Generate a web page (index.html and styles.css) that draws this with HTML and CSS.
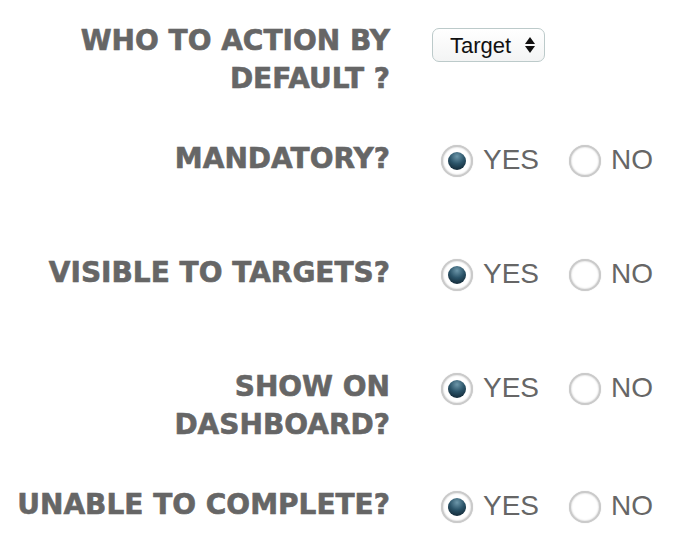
FILE: index.html
```html
<!DOCTYPE html>
<html lang="en">
<head>
    <meta charset="UTF-8">
    <title>Task settings</title>
    <link rel="stylesheet" href="styles.css">
</head>
<body>
    <form class="settings-form">
        <div class="setting-row">
            <label class="setting-label" for="actionBy">WHO TO ACTION BY<br>DEFAULT ?</label>
            <div class="setting-control">
                <div class="select-wrap">
                    <select id="actionBy">
                        <option>Target</option>
                        <option>Owner</option>
                    </select>
                    <svg class="select-arrows" width="10" height="17" viewBox="0 0 10 17">
                        <path d="M5 0 L10 7 L0 7 Z" fill="#111"/>
                        <path d="M0 9 L10 9 L5 16 Z" fill="#111"/>
                    </svg>
                </div>
            </div>
        </div>

        <div class="setting-row">
            <span class="setting-label">MANDATORY?</span>
            <div class="setting-control">
                <label class="radio"><input type="radio" name="mandatory" checked> YES</label>
                <label class="radio"><input type="radio" name="mandatory"> NO</label>
            </div>
        </div>

        <div class="setting-row">
            <span class="setting-label">VISIBLE TO TARGETS?</span>
            <div class="setting-control">
                <label class="radio"><input type="radio" name="visible" checked> YES</label>
                <label class="radio"><input type="radio" name="visible"> NO</label>
            </div>
        </div>

        <div class="setting-row">
            <span class="setting-label">SHOW ON<br>DASHBOARD?</span>
            <div class="setting-control">
                <label class="radio"><input type="radio" name="dashboard" checked> YES</label>
                <label class="radio"><input type="radio" name="dashboard"> NO</label>
            </div>
        </div>

        <div class="setting-row">
            <span class="setting-label">UNABLE TO COMPLETE?</span>
            <div class="setting-control">
                <label class="radio"><input type="radio" name="unable" checked> YES</label>
                <label class="radio"><input type="radio" name="unable"> NO</label>
            </div>
        </div>
    </form>
</body>
</html>
```

FILE: styles.css
```css
body {
    margin: 0;
    background-color: #fff;
    font-family: "Liberation Sans", Arial, sans-serif;
}
.settings-form {
    display: flex;
    flex-direction: column;
    gap: 42px;
    padding-top: 22px;
}
.setting-row {
    display: grid;
    grid-template-columns: 390px 1fr;
    column-gap: 42px;
    min-height: 72px;
    align-items: start;
}
.setting-label {
    font-family: "DejaVu Sans", Verdana, sans-serif;
    font-weight: bold;
    font-size: 28px;
    line-height: 38px;
    color: #666;
    -webkit-text-stroke: 0.6px #666;
    text-align: right;
    white-space: nowrap;
}
.setting-control {
    display: flex;
    align-items: center;
    height: 38px;
}
.select-wrap {
    position: relative;
    margin-top: 8px;
}
.select-wrap select {
    appearance: none;
    -webkit-appearance: none;
    width: 113px;
    height: 34px;
    padding: 0 0 0 17px;
    border: 1px solid #bccaca;
    border-radius: 7px;
    background: linear-gradient(#fff, #f3f4f4);
    font-family: "Liberation Sans", Arial, sans-serif;
    font-size: 22px;
    color: #111;
}
.select-arrows {
    position: absolute;
    right: 10px;
    top: 9px;
    pointer-events: none;
}
.radio {
    display: flex;
    align-items: center;
    font-size: 28px;
    color: #666;
    margin-right: 30px;
    padding-top: 2px;
}
.radio input {
    appearance: none;
    -webkit-appearance: none;
    width: 32px;
    height: 32px;
    margin: 2px 10px 0 9px;
    border-radius: 50%;
    border: 2px solid #cacaca;
    background: #fff;
    box-shadow: inset 0 0 2px rgba(0,0,0,0.25), 0 0 1px rgba(0,0,0,0.2);
    display: grid;
    place-items: center;
}
.radio + .radio input {
    margin-left: 0;
}
.radio input:checked::after {
    content: "";
    width: 18px;
    height: 18px;
    border-radius: 50%;
    background: radial-gradient(circle at 50% 25%, #6d97aa 0%, #2b5469 45%, #0a1a25 100%);
}
```
